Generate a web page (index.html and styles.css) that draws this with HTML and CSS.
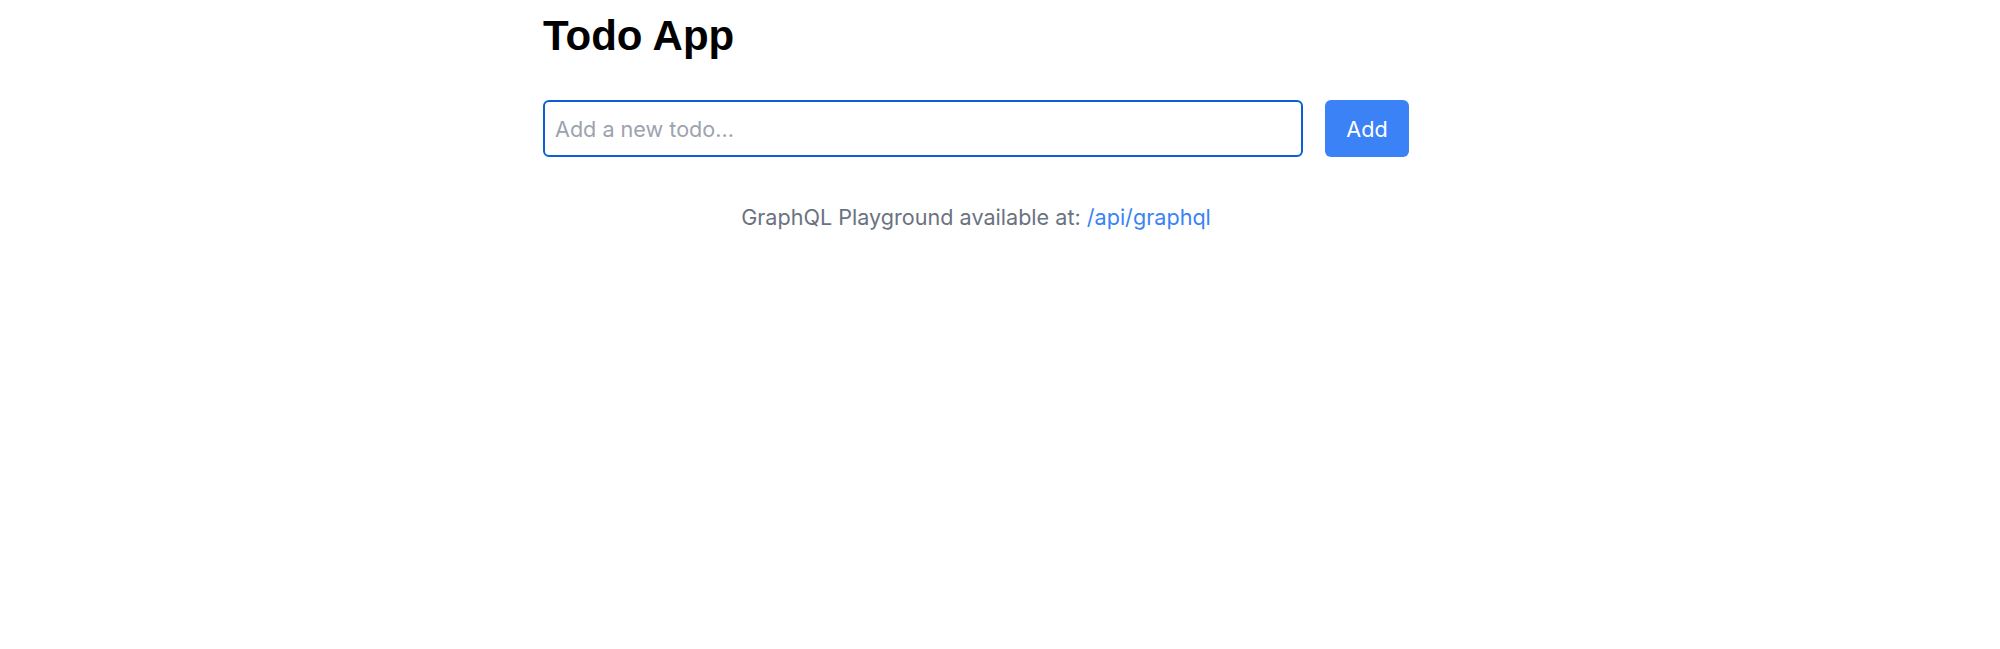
FILE: index.html
```html
<!DOCTYPE html>
<html lang="en">
<head>
    <meta charset="UTF-8">
    <meta name="viewport" content="width=device-width, initial-scale=1.0">
    <title>Todo App</title>
    <link rel="stylesheet" href="styles.css">
</head>
<body>
    <div class="container">
        <h1>Todo App</h1>

        <form class="todo-form">
            <input type="text" class="todo-input" placeholder="Add a new todo...">
            <button type="button" class="add-btn">Add</button>
        </form>

        <p class="api-note">GraphQL Playground available at: <a href="/api/graphql">/api/graphql</a></p>
    </div>
</body>
</html>
```

FILE: styles.css
```css
body {
    margin: 0;
    padding: 12px 48px 0 0;
    font-family: 'Inter', 'Noto Sans', sans-serif;
    background: #ffffff;
    color: #111827;
}
.container {
    max-width: 866px;
    margin: 0 auto;
}
h1 {
    font-family: 'Liberation Sans', Arial, sans-serif;
    font-size: 42px;
    font-weight: bold;
    line-height: 48px;
    margin: 0 0 40px 0;
    color: #000;
}
.todo-form {
    display: flex;
    gap: 22px;
    margin: 0;
}
.todo-input {
    flex: 1;
    height: 57px;
    box-sizing: border-box;
    padding: 0 10px;
    font-family: 'Inter', sans-serif;
    font-size: 21.6px;
    color: #111827;
    border: 2.5px solid #0b5fd6;
    border-radius: 6px;
    outline: none;
}
.todo-input::placeholder {
    color: #9ca3af;
}
.add-btn {
    width: 84px;
    height: 57px;
    border: none;
    border-radius: 6px;
    background: #3b82f6;
    color: #fff;
    font-family: 'Inter', sans-serif;
    font-size: 21.6px;
    cursor: pointer;
}
.api-note {
    margin: 45px 0 0 0;
    text-align: center;
    font-size: 21.6px;
    line-height: 30px;
    color: #6b7280;
}
.api-note a {
    color: #3b82f6;
    text-decoration: none;
}
```
